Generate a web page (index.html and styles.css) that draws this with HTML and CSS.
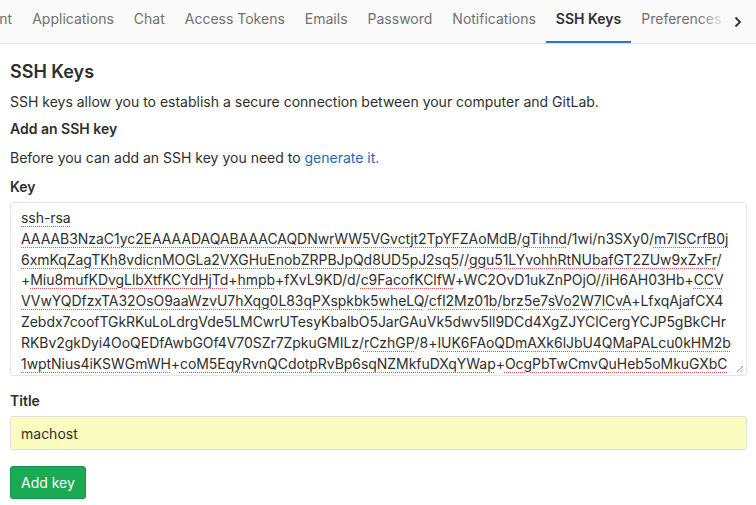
FILE: index.html
```html
<!DOCTYPE html>
<html lang="en">
<head>
    <meta charset="UTF-8">
    <meta name="viewport" content="width=device-width, initial-scale=1.0">
    <title>SSH Keys</title>
    <link rel="stylesheet" href="styles.css">
</head>
<body>

<nav class="tabs">
    <ul class="tab-list">
        <li><a href="#">Account</a></li>
        <li><a href="#">Applications</a></li>
        <li><a href="#">Chat</a></li>
        <li><a href="#">Access Tokens</a></li>
        <li><a href="#">Emails</a></li>
        <li><a href="#">Password</a></li>
        <li><a href="#">Notifications</a></li>
        <li class="active"><a href="#">SSH Keys</a></li>
        <li><a href="#">Preferences</a></li>
        <li><a href="#">Audit Log</a></li>
    </ul>
    <div class="scroll-right">
        <svg width="8" height="12" viewBox="0 0 8 12"><path d="M1.5 1.5 L6 6 L1.5 10.5" fill="none" stroke="#2e2e2e" stroke-width="1.8"/></svg>
    </div>
</nav>

<main class="content">
    <h3>SSH Keys</h3>
    <p>SSH keys allow you to establish a secure connection between your computer and GitLab.</p>
    <h4>Add an SSH key</h4>
    <p>Before you can add an SSH key you need to <a href="#">generate it.</a></p>

    <form class="key-form">
        <label class="field-label">Key</label>
        <div class="key-box">
<div class="key-line"><span class="sp">ssh-rsa</span></div>
<div class="key-line"><span class="sp">AAAAB3NzaC1yc2EAAAADAQABAAACAQDNwrWW5VGvctjt2TpYFZAoMdB</span>/<span class="sp">gTihnd</span>/1wi/n3SXy0/<span class="sp">m7lSCrfB0j</span></div>
<div class="key-line"><span class="sp">6xmKqZagTKh8vdicnMOGLa2VXGHuEnobZRPBJpQd8UD5pJ2sq5</span>//<span class="sp">ggu51LYvohhRtNUbafGT2ZUw9xZxFr</span>/</div>
<div class="key-line">+<span class="sp">Miu8mufKDvgLlbXtfKCYdHjTd</span>+<span class="sp">hmpb</span>+fXvL9KD/d/<span class="sp">c9FacofKClfW</span>+WC2OvD1ukZnPOjO//iH6AH03Hb+<span class="sp">CCV</span></div>
<div class="key-line"><span class="sp">VVwYQDfzxTA32OsO9aaWzvU7hXqg0L83qPXspkbk5wheLQ</span>/<span class="sp">cfI2Mz01b</span>/<span class="sp">brz5e7sVo2W7lCvA</span>+LfxqAjafCX4</div>
<div class="key-line">Zebdx7coofTGkRKuLoLdrgVde5LMCwrUTesyKbalbO5JarGAuVk5dwv5ll9DCd4XgZJYClCergYCJP5gBkCHr</div>
<div class="key-line">RKBv2gkDyi4OoQEDfAwbGOf4V70SZr7ZpkuGMILz/<span class="sp">rCzhGP</span>/8+<span class="sp">IUK6FAoQDmAXk6lJbU4QMaPALcu0kHM2b</span></div>
<div class="key-line"><span class="sp">1wptNius4iKSWGmWH</span>+<span class="sp">coM5EqyRvnQCdotpRvBp6sqNZMkfuDXqYWap</span>+<span class="sp">OcgPbTwCmvQuHeb5oMkuGXbC</span></div>
<div class="key-line"><span class="sp">PjVFsDwbh9Jx4SmGrwuNSZhgofTkbZUf3fRDjQ2kNbwRnCF5YhLu7EmNbZnTrdGBWjLwyPlGr</span>+NDyJF</div>
            <svg class="grip" width="8" height="8" viewBox="0 0 8 8"><path d="M7 1 L1 7 M7 4.5 L4.5 7" stroke="#9a9a9a" stroke-width="1"/></svg>
        </div>

        <label class="field-label title-label">Title</label>
        <input class="title-input" type="text" value="machost">

        <button type="button" class="btn-create">Add key</button>
    </form>
</main>

</body>
</html>
```

FILE: styles.css
```css
body {
    font-family: Inter, "Liberation Sans", sans-serif;
    font-size: 14px;
    margin: 0;
    color: #2e2e2e;
    background: white;
}
.tabs {
    position: relative;
    height: 43px;
    background: #fafafa;
    border-bottom: 1px solid #e5e5e5;
    overflow: hidden;
}
.tab-list {
    display: flex;
    list-style: none;
    margin: 0 0 0 -53px;
    padding: 0;
    white-space: nowrap;
}
.tab-list li a {
    display: block;
    padding: 10px 10px 13px;
    line-height: 18px;
    color: #707070;
    text-decoration: none;
    border-bottom: 2px solid transparent;
}
.tab-list li.active a {
    color: #2e2e2e;
    font-weight: 600;
    border-bottom-color: #1f78d1;
}
.scroll-right {
    position: absolute;
    top: 0;
    right: 0;
    width: 56px;
    height: 43px;
    display: flex;
    align-items: center;
    justify-content: flex-end;
    padding-right: 14px;
    box-sizing: border-box;
    background: linear-gradient(to right, rgba(250, 250, 250, 0), #fafafa 45%);
}
.content {
    padding: 0 9px 0 10px;
}
h3 {
    font-size: 18px;
    font-weight: 600;
    margin: 17px 0 0;
    line-height: 22px;
}
p {
    margin: 9px 0 0;
    line-height: 20px;
}
h4 {
    font-size: 14px;
    font-weight: 600;
    margin: 7px 0 0;
    line-height: 20px;
}
a {
    color: #1b69b6;
    text-decoration: none;
}
.field-label {
    display: block;
    font-weight: 600;
    margin-top: 9px;
    line-height: 20px;
}
.key-box {
    position: relative;
    margin-top: 5px;
    height: 174px;
    border: 1px solid #e5e5e5;
    border-radius: 3px;
    padding: 5px 10px 0;
    overflow: hidden;
    box-sizing: border-box;
}
.key-line {
    white-space: pre;
    line-height: 20.8px;
    font-size: 14px;
    letter-spacing: -0.05px;
}
.sp {
    text-decoration: underline dotted #e0534f;
    text-underline-offset: 3px;
    text-decoration-thickness: 1px;
}
.grip {
    position: absolute;
    right: 2px;
    bottom: 2px;
}
.title-label {
    margin-top: 15px;
}
.title-input {
    display: block;
    width: 100%;
    height: 34px;
    margin-top: 5px;
    padding: 6px 10px;
    box-sizing: border-box;
    border: 1px solid #e0e0e0;
    border-radius: 3px;
    background: #fafcc0;
    font-family: inherit;
    font-size: 14px;
    color: #2e2e2e;
}
.btn-create {
    display: block;
    margin-top: 16px;
    padding: 6px 10px;
    height: 33px;
    background: #1aaa55;
    border: 1px solid #168f48;
    border-radius: 3px;
    color: white;
    font-family: inherit;
    font-size: 14px;
    cursor: pointer;
}
```
